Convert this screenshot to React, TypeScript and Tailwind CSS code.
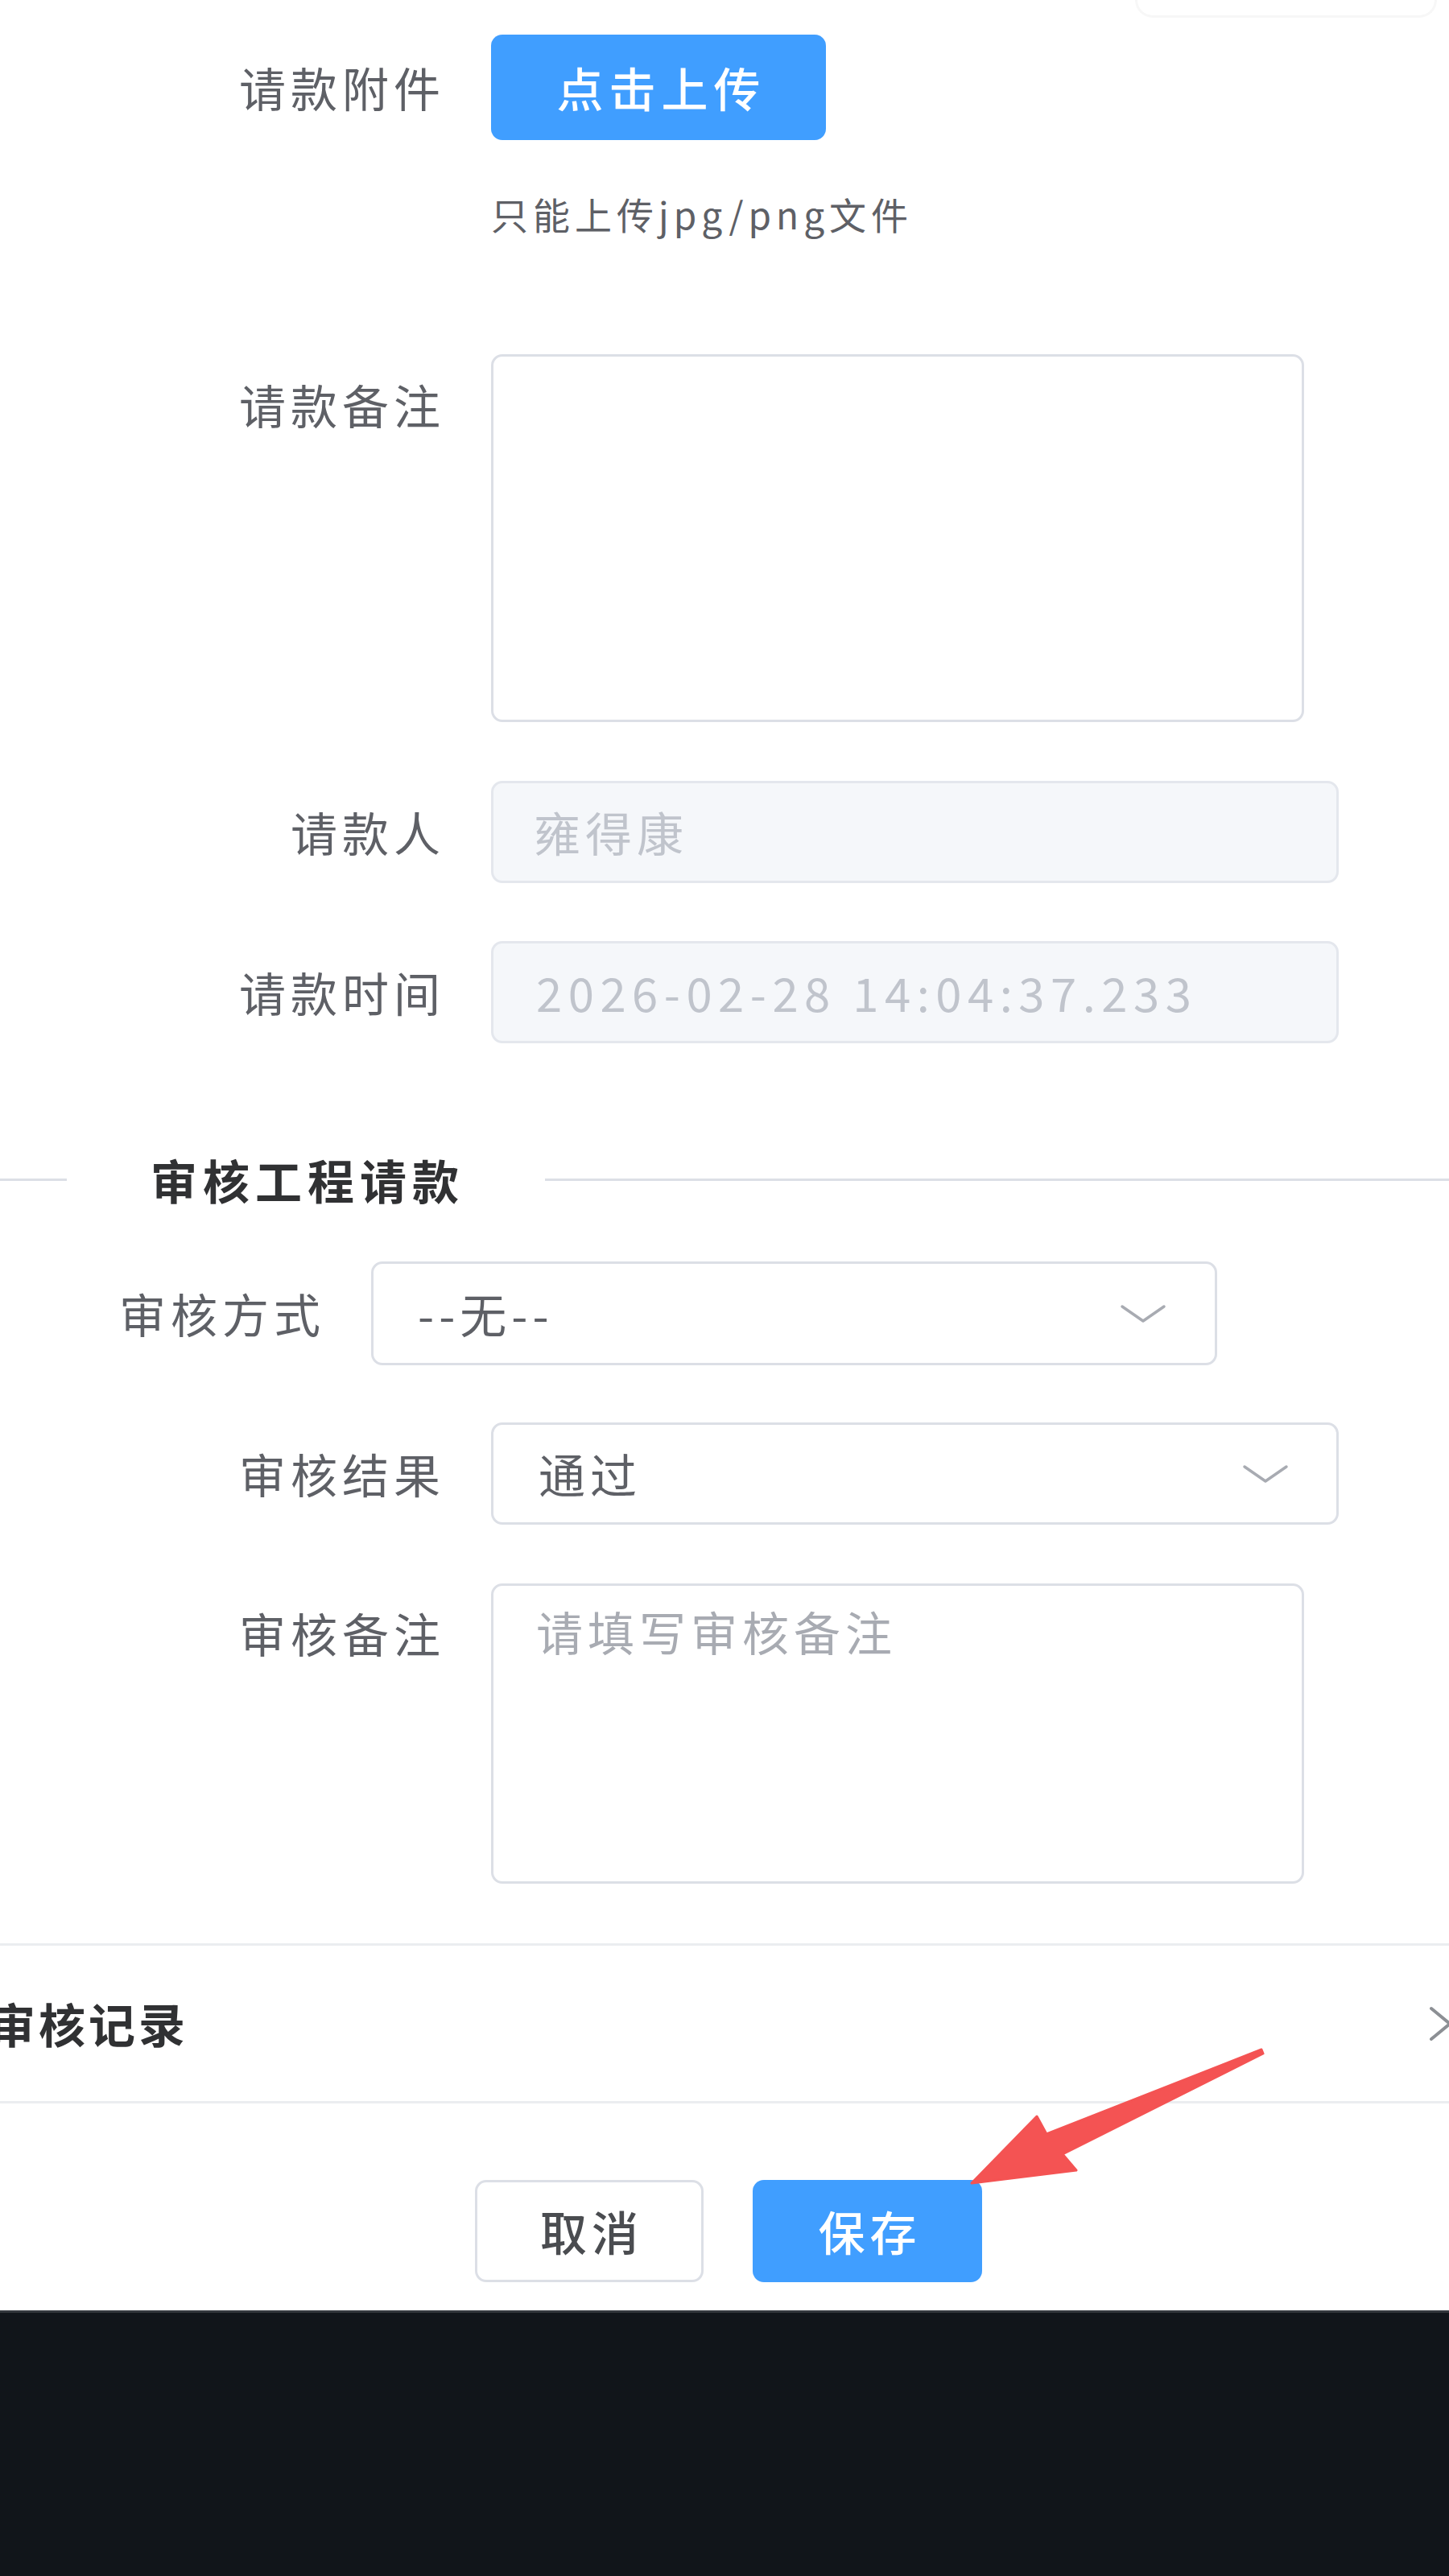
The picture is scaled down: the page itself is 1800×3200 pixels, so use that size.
import React from "react";

function Chevron() {
  return (
    <svg width="58" height="26" viewBox="0 0 58 26" fill="none">
      <polyline
        points="3,4 29,22 55,4"
        stroke="#a8abb2"
        strokeWidth="3.5"
        strokeLinecap="round"
        strokeLinejoin="round"
      />
    </svg>
  );
}

function RightChevron() {
  return (
    <svg width="32" height="46" viewBox="0 0 32 46" fill="none">
      <polyline
        points="4,4 27,23 4,42"
        stroke="#8c8f94"
        strokeWidth="4"
        strokeLinecap="round"
        strokeLinejoin="round"
      />
    </svg>
  );
}

function Arrow() {
  return (
    <svg
      className="absolute left-[1190px] top-[2530px]"
      width="400"
      height="200"
      viewBox="0 0 400 200"
    >
      <polygon
        points="17,182 98,99 110,121 377,16 379,21 130,146 147,166"
        fill="#f45353"
        stroke="#f45353"
        strokeWidth="3"
        strokeLinejoin="round"
      />
    </svg>
  );
}

export default function App() {
  return (
    <div className="relative w-[1800px] h-[3200px] overflow-hidden bg-white font-['Noto_Sans_CJK_SC','Noto_Sans',sans-serif]">
      <div className="flex h-[2870px] flex-col bg-white">
        {/* faint top-right element */}
        <div className="flex justify-end pr-[15px]">
          <div className="h-[22px] w-[375px] rounded-b-[28px] border-[3px] border-t-0 border-[#f7f7f7]" />
        </div>

        {/* 请款附件 */}
        <div className="mt-[21px] flex">
          <div className="w-[610px] shrink-0 pr-[57px] text-right text-[58px] leading-[131px] tracking-[6px] text-[#5e6066]">
            请款附件
          </div>
          <div className="flex h-[131px] w-[416px] items-center justify-center rounded-[14px] bg-[#409eff] pl-[7px] text-[58px] font-medium tracking-[7px] text-white">
            点击上传
          </div>
        </div>
        <div className="ml-[610px] mt-[58px] text-[46px] leading-[66px] tracking-[6px] text-[#5e6066]">
          只能上传jpg/png文件
        </div>

        {/* 请款备注 */}
        <div className="mt-[142px] flex">
          <div className="w-[610px] shrink-0 pr-[57px] text-right text-[58px] leading-[124px] tracking-[6px] text-[#5e6066]">
            请款备注
          </div>
          <div className="h-[457px] w-[1010px] rounded-[14px] border-[3px] border-[#dcdfe6] bg-white" />
        </div>

        {/* 请款人 */}
        <div className="mt-[73px] flex">
          <div className="w-[610px] shrink-0 pr-[57px] text-right text-[58px] leading-[127px] tracking-[6px] text-[#5e6066]">
            请款人
          </div>
          <div className="flex h-[127px] w-[1053px] items-center rounded-[14px] border-[3px] border-[#e4e7ed] bg-[#f5f7fa] pl-[50px] text-[58px] tracking-[6px] text-[#c0c4cc]">
            雍得康
          </div>
        </div>

        {/* 请款时间 */}
        <div className="mt-[72px] flex">
          <div className="w-[610px] shrink-0 pr-[57px] text-right text-[58px] leading-[127px] tracking-[6px] text-[#5e6066]">
            请款时间
          </div>
          <div className="flex h-[127px] w-[1053px] items-center rounded-[14px] border-[3px] border-[#e4e7ed] bg-[#f5f7fa] pl-[53px] text-[58px] tracking-[7.5px] text-[#c0c4cc]">
            2026-02-28 14:04:37.233
          </div>
        </div>

        {/* divider */}
        <div className="mt-[139px] flex h-[60px] items-center">
          <div className="h-[3px] w-[83px] bg-[#dcdfe6]" />
          <div className="ml-[104px] mr-[100px] text-[58px] font-bold leading-[60px] tracking-[7px] text-[#303133]">
            审核工程请款
          </div>
          <div className="h-[3px] flex-1 bg-[#dcdfe6]" />
        </div>

        {/* 审核方式 */}
        <div className="mt-[72px] flex">
          <div className="w-[461px] shrink-0 pr-[57px] text-right text-[58px] leading-[129px] tracking-[6px] text-[#5e6066]">
            审核方式
          </div>
          <div className="flex h-[129px] w-[1051px] items-center justify-between rounded-[14px] border-[3px] border-[#dcdfe6] bg-white pl-[55px] pr-[60px] text-[58px] tracking-[6px] text-[#5e6066]">
            <span>--无--</span>
            <Chevron />
          </div>
        </div>

        {/* 审核结果 */}
        <div className="mt-[71px] flex">
          <div className="w-[610px] shrink-0 pr-[57px] text-right text-[58px] leading-[127px] tracking-[6px] text-[#5e6066]">
            审核结果
          </div>
          <div className="flex h-[127px] w-[1053px] items-center justify-between rounded-[14px] border-[3px] border-[#dcdfe6] bg-white pl-[56px] pr-[59px] text-[58px] tracking-[6px] text-[#5e6066]">
            <span>通过</span>
            <Chevron />
          </div>
        </div>

        {/* 审核备注 */}
        <div className="mt-[73px] flex">
          <div className="w-[610px] shrink-0 pr-[57px] text-right text-[58px] leading-[122px] tracking-[6px] text-[#5e6066]">
            审核备注
          </div>
          <div className="h-[373px] w-[1010px] rounded-[14px] border-[3px] border-[#dcdfe6] bg-white pl-[53px] pt-[14px] text-[58px] leading-[84px] tracking-[6px] text-[#a8abb2]">
            请填写审核备注
          </div>
        </div>

        <div className="mt-[74px] h-[3px] bg-[#ebedf0]" />

        {/* 审核记录 */}
        <div className="flex h-[193px] items-center justify-between">
          <div className="ml-[-14px] text-[58px] font-semibold tracking-[4px] text-[#303133]">
            审核记录
          </div>
          <div className="mr-[-6px]">
            <RightChevron />
          </div>
        </div>

        <div className="h-[3px] bg-[#ebedf0]" />

        {/* buttons */}
        <div className="mt-[95px] flex justify-center gap-[61px] pl-[10px]">
          <div className="flex h-[127px] w-[284px] items-center justify-center rounded-[14px] border-[3px] border-[#dcdfe6] bg-white pl-[6px] text-[58px] font-medium tracking-[6px] text-[#4a4c50]">
            取消
          </div>
          <div className="flex h-[127px] w-[285px] items-center justify-center rounded-[14px] bg-[#409eff] pl-[6px] text-[58px] font-medium tracking-[6px] text-white">
            保存
          </div>
        </div>
      </div>

      <div className="h-[330px] border-t-[3px] border-[#33373d] bg-[#11151a]" />

      <Arrow />
    </div>
  );
}
